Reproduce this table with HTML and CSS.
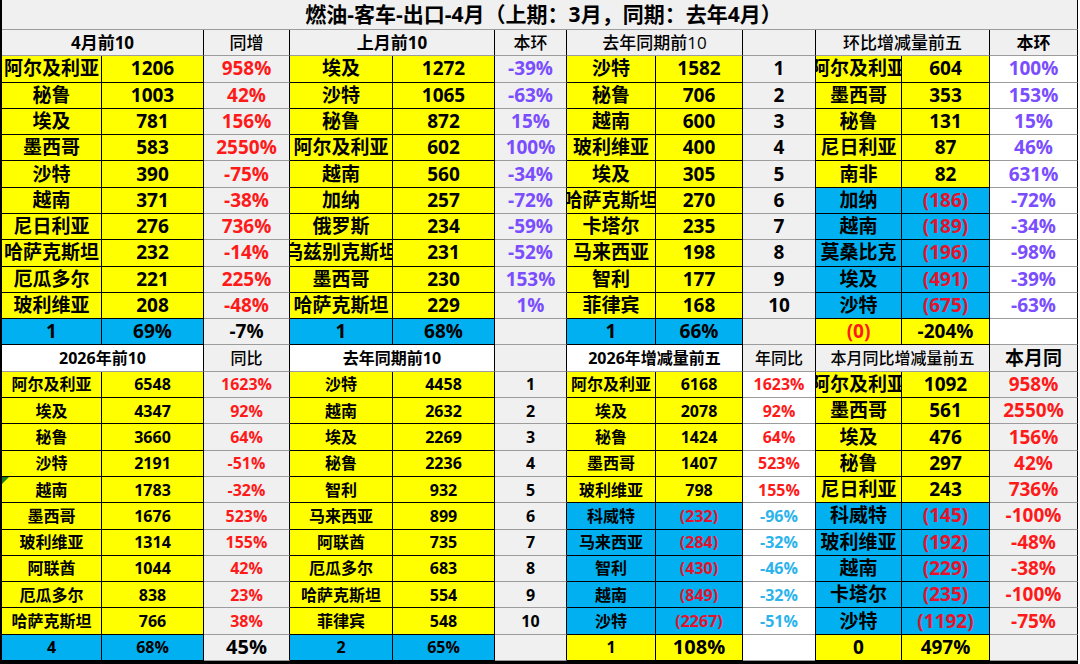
FILE: index.html
```html
<!DOCTYPE html>
<html lang="zh-CN">
<head>
<meta charset="utf-8">
<title>燃油-客车-出口-4月</title>
<link rel="stylesheet" href="styles.css">
</head>
<body>
<div class="sheet">
  <div class="c title g">燃油-客车-出口-4月（上期：3月，同期：去年4月）</div>

  <!-- header 1 -->
  <div class="c g s2 h">4月前10</div><div class="c g h lt">同增</div>
  <div class="c g s2 h">上月前10</div><div class="c g h lt">本环</div>
  <div class="c g s2 h lt">去年同期前10</div><div class="c g"></div>
  <div class="c g s2 h lt sep">环比增减量前五</div><div class="c g h">本环</div>

  <!-- rows 1-10 -->
  <div class="c y">阿尔及利亚</div><div class="c y">1206</div><div class="c g r">958%</div>
  <div class="c y">埃及</div><div class="c y">1272</div><div class="c g p">-39%</div>
  <div class="c y">沙特</div><div class="c y">1582</div><div class="c g">1</div>
  <div class="c y sep">阿尔及利亚</div><div class="c y">604</div><div class="c w p">100%</div>

  <div class="c y">秘鲁</div><div class="c y">1003</div><div class="c g r">42%</div>
  <div class="c y">沙特</div><div class="c y">1065</div><div class="c g p">-63%</div>
  <div class="c y">秘鲁</div><div class="c y">706</div><div class="c g">2</div>
  <div class="c y sep">墨西哥</div><div class="c y">353</div><div class="c w p">153%</div>

  <div class="c y">埃及</div><div class="c y">781</div><div class="c g r">156%</div>
  <div class="c y">秘鲁</div><div class="c y">872</div><div class="c g p">15%</div>
  <div class="c y">越南</div><div class="c y">600</div><div class="c g">3</div>
  <div class="c y sep">秘鲁</div><div class="c y">131</div><div class="c w p">15%</div>

  <div class="c y">墨西哥</div><div class="c y">583</div><div class="c g r">2550%</div>
  <div class="c y">阿尔及利亚</div><div class="c y">602</div><div class="c g p">100%</div>
  <div class="c y">玻利维亚</div><div class="c y">400</div><div class="c g">4</div>
  <div class="c y sep">尼日利亚</div><div class="c y">87</div><div class="c w p">46%</div>

  <div class="c y">沙特</div><div class="c y">390</div><div class="c g r">-75%</div>
  <div class="c y">越南</div><div class="c y">560</div><div class="c g p">-34%</div>
  <div class="c y">埃及</div><div class="c y">305</div><div class="c g">5</div>
  <div class="c y sep">南非</div><div class="c y">82</div><div class="c w p">631%</div>

  <div class="c y">越南</div><div class="c y">371</div><div class="c g r">-38%</div>
  <div class="c y">加纳</div><div class="c y">257</div><div class="c g p">-72%</div>
  <div class="c y">哈萨克斯坦</div><div class="c y">270</div><div class="c g">6</div>
  <div class="c b sep">加纳</div><div class="c b r">(186)</div><div class="c w p">-72%</div>

  <div class="c y">尼日利亚</div><div class="c y">276</div><div class="c g r">736%</div>
  <div class="c y">俄罗斯</div><div class="c y">234</div><div class="c g p">-59%</div>
  <div class="c y">卡塔尔</div><div class="c y">235</div><div class="c g">7</div>
  <div class="c b sep">越南</div><div class="c b r">(189)</div><div class="c w p">-34%</div>

  <div class="c y">哈萨克斯坦</div><div class="c y">232</div><div class="c g r">-14%</div>
  <div class="c y">乌兹别克斯坦</div><div class="c y">231</div><div class="c g p">-52%</div>
  <div class="c y">马来西亚</div><div class="c y">198</div><div class="c g">8</div>
  <div class="c b sep">莫桑比克</div><div class="c b r">(196)</div><div class="c w p">-98%</div>

  <div class="c y">厄瓜多尔</div><div class="c y">221</div><div class="c g r">225%</div>
  <div class="c y">墨西哥</div><div class="c y">230</div><div class="c g p">153%</div>
  <div class="c y">智利</div><div class="c y">177</div><div class="c g">9</div>
  <div class="c b sep">埃及</div><div class="c b r">(491)</div><div class="c w p">-39%</div>

  <div class="c y">玻利维亚</div><div class="c y">208</div><div class="c g r">-48%</div>
  <div class="c y">哈萨克斯坦</div><div class="c y">229</div><div class="c g p">1%</div>
  <div class="c y">菲律宾</div><div class="c y">168</div><div class="c g">10</div>
  <div class="c b sep">沙特</div><div class="c b r">(675)</div><div class="c w p">-63%</div>

  <!-- summary 1 -->
  <div class="c b">1</div><div class="c b">69%</div><div class="c g">-7%</div>
  <div class="c b">1</div><div class="c b">68%</div><div class="c g"></div>
  <div class="c b">1</div><div class="c b">66%</div><div class="c g"></div>
  <div class="c y r sep">(0)</div><div class="c y">-204%</div><div class="c w"></div>

  <!-- header 2 -->
  <div class="c w s2 sm">2026年前10</div><div class="c g sm lt">同比</div>
  <div class="c w s2 sm">去年同期前10</div><div class="c g"></div>
  <div class="c w s2 sm">2026年增减量前五</div><div class="c g sm lt">年同比</div>
  <div class="c g s2 sm lt sep">本月同比增减量前五</div><div class="c g">本月同</div>

  <!-- rows 1-10 bottom -->
  <div class="c y sm">阿尔及利亚</div><div class="c y sm">6548</div><div class="c g sm r">1623%</div>
  <div class="c y sm">沙特</div><div class="c y sm">4458</div><div class="c g sm">1</div>
  <div class="c y sm">阿尔及利亚</div><div class="c y sm">6168</div><div class="c w sm r">1623%</div>
  <div class="c y sep">阿尔及利亚</div><div class="c y">1092</div><div class="c g r">958%</div>

  <div class="c y sm">埃及</div><div class="c y sm">4347</div><div class="c g sm r">92%</div>
  <div class="c y sm">越南</div><div class="c y sm">2632</div><div class="c g sm">2</div>
  <div class="c y sm">埃及</div><div class="c y sm">2078</div><div class="c w sm r">92%</div>
  <div class="c y sep">墨西哥</div><div class="c y">561</div><div class="c g r">2550%</div>

  <div class="c y sm">秘鲁</div><div class="c y sm">3660</div><div class="c g sm r">64%</div>
  <div class="c y sm">埃及</div><div class="c y sm">2269</div><div class="c g sm">3</div>
  <div class="c y sm">秘鲁</div><div class="c y sm">1424</div><div class="c w sm r">64%</div>
  <div class="c y sep">埃及</div><div class="c y">476</div><div class="c g r">156%</div>

  <div class="c y sm">沙特</div><div class="c y sm">2191</div><div class="c g sm r">-51%</div>
  <div class="c y sm">秘鲁</div><div class="c y sm">2236</div><div class="c g sm">4</div>
  <div class="c y sm">墨西哥</div><div class="c y sm">1407</div><div class="c w sm r">523%</div>
  <div class="c y sep">秘鲁</div><div class="c y">297</div><div class="c g r">42%</div>

  <div class="c y sm tri">越南</div><div class="c y sm">1783</div><div class="c g sm r">-32%</div>
  <div class="c y sm">智利</div><div class="c y sm">932</div><div class="c g sm">5</div>
  <div class="c y sm">玻利维亚</div><div class="c y sm">798</div><div class="c w sm r">155%</div>
  <div class="c y sep">尼日利亚</div><div class="c y">243</div><div class="c g r">736%</div>

  <div class="c y sm">墨西哥</div><div class="c y sm">1676</div><div class="c g sm r">523%</div>
  <div class="c y sm">马来西亚</div><div class="c y sm">899</div><div class="c g sm">6</div>
  <div class="c b sm">科威特</div><div class="c b sm r">(232)</div><div class="c w sm lb">-96%</div>
  <div class="c b sep">科威特</div><div class="c b r">(145)</div><div class="c g r">-100%</div>

  <div class="c y sm">玻利维亚</div><div class="c y sm">1314</div><div class="c g sm r">155%</div>
  <div class="c y sm">阿联酋</div><div class="c y sm">735</div><div class="c g sm">7</div>
  <div class="c b sm">马来西亚</div><div class="c b sm r">(284)</div><div class="c w sm lb">-32%</div>
  <div class="c b sep">玻利维亚</div><div class="c b r">(192)</div><div class="c g r">-48%</div>

  <div class="c y sm">阿联酋</div><div class="c y sm">1044</div><div class="c g sm r">42%</div>
  <div class="c y sm">厄瓜多尔</div><div class="c y sm">683</div><div class="c g sm">8</div>
  <div class="c b sm">智利</div><div class="c b sm r">(430)</div><div class="c w sm lb">-46%</div>
  <div class="c b sep">越南</div><div class="c b r">(229)</div><div class="c g r">-38%</div>

  <div class="c y sm">厄瓜多尔</div><div class="c y sm">838</div><div class="c g sm r">23%</div>
  <div class="c y sm">哈萨克斯坦</div><div class="c y sm">554</div><div class="c g sm">9</div>
  <div class="c b sm">越南</div><div class="c b sm r">(849)</div><div class="c w sm lb">-32%</div>
  <div class="c b sep">卡塔尔</div><div class="c b r">(235)</div><div class="c g r">-100%</div>

  <div class="c y sm">哈萨克斯坦</div><div class="c y sm">766</div><div class="c g sm r">38%</div>
  <div class="c y sm">菲律宾</div><div class="c y sm">548</div><div class="c g sm">10</div>
  <div class="c b sm">沙特</div><div class="c b sm r">(2267)</div><div class="c w sm lb">-51%</div>
  <div class="c b sep">沙特</div><div class="c b r">(1192)</div><div class="c g r">-75%</div>

  <!-- summary 2 -->
  <div class="c b sm">4</div><div class="c b sm">68%</div><div class="c g big">45%</div>
  <div class="c b sm">2</div><div class="c b sm">65%</div><div class="c g"></div>
  <div class="c y sm">1</div><div class="c y big">108%</div><div class="c w"></div>
  <div class="c y sep">0</div><div class="c y">497%</div><div class="c g"></div>
</div>
</body>
</html>
```

FILE: styles.css
```css
html, body {
  margin: 0;
  padding: 0;
  background: #ffffff;
}

body {
  font-family: "Open Sans", "Noto Sans CJK SC", sans-serif;
}

.sheet {
  display: grid;
  grid-template-columns: 100px 102px 86px 103px 102px 72px 89px 87px 73px 86px 88px 88px;
  grid-template-rows: 30px repeat(24, 1fr);
  width: 1076px;
  height: 661px;
  border-left: 2px solid #000;
  border-bottom: 3px solid #000;
}

.c {
  box-sizing: border-box;
  border-right: 1px solid #000;
  border-bottom: 1px solid #000;
  display: flex;
  align-items: center;
  justify-content: center;
  overflow: hidden;
  white-space: nowrap;
  font-size: 19px;
  font-weight: 700;
  line-height: 1;
  color: #000;
  position: relative;
}

.title {
  grid-column: 1 / -1;
  font-size: 21px;
  background: #f2f2f2;
  border-bottom-color: #000;
  padding-left: 8px;
}

.s2 { grid-column: span 2; }

.y { background: #ffff00; }
.b { background: #00b0f0; }
.g { background: #f0f0f0; border-bottom-color: #9c9c9c; }
.w { background: #ffffff; border-bottom-color: #9c9c9c; }

.sep { border-left: 1px solid #000; margin-left: -1px; }

.h { font-size: 17px; }
.sm { font-size: 16px; }
.big { font-size: 20px; }
.lt { font-weight: 500; }

.r { color: #ff1a1a; }
.b.r { color: #e8102a; }
.p { color: #7a4dff; }
.lb { color: #2bb3ec; }

.tri::before {
  content: "";
  position: absolute;
  left: 0;
  top: 0;
  border-top: 7px solid #1b7d1b;
  border-right: 7px solid transparent;
}
```
